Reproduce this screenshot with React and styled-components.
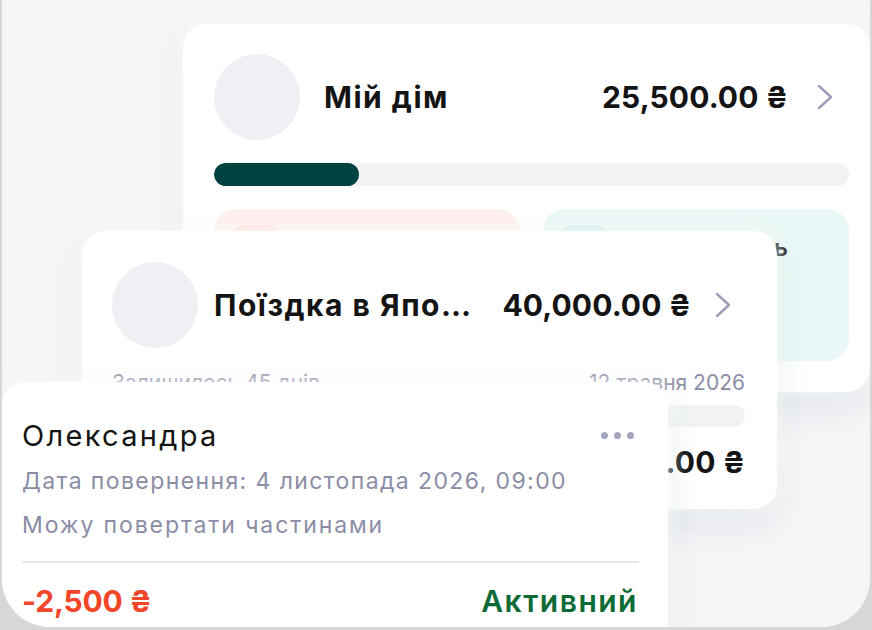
import React from "react";
import styled, { createGlobalStyle } from "styled-components";

const Global = createGlobalStyle`
  html, body { margin: 0; padding: 0; background: #d5d7d9; }
  body { font-family: Inter, "Noto Sans", sans-serif; -webkit-font-smoothing: antialiased; }
`;

const Stage = styled.div`
  width: 872px;
  height: 630px;
  background: #d5d7d9;
  padding-left: 2px;
  box-sizing: border-box;
  overflow: hidden;
`;

const Screen = styled.div`
  position: relative;
  width: 868px;
  height: 627px;
  background: #f6f5f8;
  border-radius: 0 0 48px 48px;
  overflow: hidden;
`;

const Card = styled.div`
  position: absolute;
  left: ${(p) => p.$left}px;
  top: ${(p) => p.$top}px;
  width: ${(p) => p.$width}px;
  box-sizing: border-box;
  padding: ${(p) => p.$pad};
  background: #ffffff;
  border-radius: 24px;
  box-shadow: 0 0 22px rgba(255, 255, 255, 0.9), 0 14px 34px rgba(40, 100, 100, 0.12);
`;

const HeaderRow = styled.div`
  display: flex;
  align-items: center;
`;

const Avatar = styled.div`
  flex: none;
  width: 86px;
  height: 86px;
  border-radius: 50%;
  background: #f0eff3;
  margin-right: ${(p) => p.$gap}px;
`;

const Title = styled.div`
  flex: 1;
  min-width: 0;
  font-size: 30px;
  font-weight: 700;
  color: #141414;
  letter-spacing: 1.5px;
  white-space: nowrap;
  overflow: hidden;
  text-overflow: ellipsis;
  max-width: ${(p) => (p.$max ? `${p.$max}px` : "none")};
`;

const Amount = styled.div`
  flex: none;
  margin-left: auto;
  font-size: 30px;
  font-weight: 700;
  color: #141414;
  letter-spacing: 0.1px;
  white-space: nowrap;
`;

const ChevronBox = styled.svg`
  flex: none;
  margin-left: ${(p) => p.$gap}px;
  margin-right: ${(p) => p.$end}px;
`;

const Chevron = ({ gap, end }) => (
  <ChevronBox $gap={gap} $end={end} width="16" height="26" viewBox="0 0 16 26">
    <polyline points="2,2 14,13 2,24" fill="none" stroke="#9c9eb9" strokeWidth="2.4" strokeLinecap="round" strokeLinejoin="round" />
  </ChevronBox>
);

const Track = styled.div`
  margin-top: ${(p) => p.$mt}px;
  height: ${(p) => p.$h}px;
  border-radius: 12px;
  background: #f1f4f3;
  overflow: hidden;
`;

const Fill = styled.div`
  height: 100%;
  border-radius: 12px;
  background: #004242;
`;

const Tiles = styled.div`
  margin-top: 23px;
  display: grid;
  grid-template-columns: 1fr 1fr;
  gap: 23px;
  height: 152px;
`;

const Tile = styled.div`
  border-radius: 22px;
  padding: 16px 17px;
  background: ${(p) => p.$bg};
  display: flex;
  align-items: flex-start;
  gap: 14px;
  overflow: hidden;
`;

const TilePill = styled.div`
  flex: none;
  width: 48px;
  height: 34px;
  border-radius: 14px;
  background: ${(p) => p.$bg};
`;

const TileLabel = styled.div`
  margin-top: 8px;
  font-size: 24px;
  font-weight: 600;
  color: #1a1a1a;
  letter-spacing: 1.8px;
  white-space: nowrap;
`;

const MetaRow = styled.div`
  margin-top: 22px;
  display: flex;
  justify-content: space-between;
  font-size: 21px;
  color: #8b8da6;
  letter-spacing: 0;
  line-height: 26px;
`;

const SumRow = styled.div`
  margin-top: 17px;
  display: flex;
  justify-content: flex-end;
  align-items: center;
`;

const NameRow = styled.div`
  display: flex;
  align-items: center;
  justify-content: space-between;
`;

const Name = styled.div`
  font-size: 29px;
  font-weight: 400;
  color: #141414;
  letter-spacing: 2.3px;
`;

const Dots = styled.div`
  display: flex;
  gap: 6px;
  margin-right: 5px;
`;

const Dot = styled.span`
  width: 7px;
  height: 7px;
  border-radius: 50%;
  background: #a4a6be;
`;

const Detail = styled.div`
  margin-top: ${(p) => p.$mt}px;
  font-size: 23px;
  color: #8b8da6;
  letter-spacing: ${(p) => p.$ls}px;
  line-height: 28px;
  white-space: nowrap;
`;

const Divider = styled.div`
  margin-top: 22px;
  height: 2px;
  background: #e8e8eb;
`;

const FootRow = styled.div`
  margin-top: 20px;
  display: flex;
  justify-content: space-between;
  align-items: center;
`;

const Debt = styled.div`
  font-size: 30px;
  font-weight: 700;
  color: #f2462a;
  letter-spacing: -0.2px;
`;

const Status = styled.div`
  font-size: 30px;
  font-weight: 600;
  color: #0b6a36;
  letter-spacing: 1.5px;
  margin-right: 1px;
`;

export default function App() {
  const homePct = 22.8;
  return (
    <>
      <Global />
      <Stage>
        <Screen>
          <Card $left={181} $top={24} $width={687} $pad="30px 21px 31px 31px">
            <HeaderRow>
              <Avatar $gap={24} />
              <Title>Мій дім</Title>
              <Amount>25,500.00 ₴</Amount>
              <Chevron gap={29} end={16} />
            </HeaderRow>
            <Track $mt={23} $h={23}>
              <Fill style={{ width: `${homePct}%` }} />
            </Track>
            <Tiles>
              <Tile $bg="#fff0ee">
                <TilePill $bg="#ffe2de" />
                <TileLabel>Витрачено</TileLabel>
              </Tile>
              <Tile $bg="#e9f8f6">
                <TilePill $bg="#d4efec" />
                <TileLabel>Залишилось</TileLabel>
              </Tile>
            </Tiles>
          </Card>

          <Card $left={80} $top={231} $width={695} $pad="31px 32px 29px 30px">
            <HeaderRow>
              <Avatar $gap={16} />
              <Title $max={264}>Поїздка в Японію</Title>
              <Amount>40,000.00 ₴</Amount>
              <Chevron gap={24} end={14} />
            </HeaderRow>
            <MetaRow>
              <span>Залишилось 45 днів</span>
              <span>12 травня 2026</span>
            </MetaRow>
            <Track $mt={9} $h={22}>
              <Fill style={{ width: "40%" }} />
            </Track>
            <SumRow>
              <Amount>16,000.00 ₴</Amount>
            </SumRow>
          </Card>

          <Card $left={0} $top={382} $width={666} $pad="36px 29px 60px 20px">
            <NameRow>
              <Name>Олександра</Name>
              <Dots>
                <Dot />
                <Dot />
                <Dot />
              </Dots>
            </NameRow>
            <Detail $mt={14} $ls={1.4}>Дата повернення: 4 листопада 2026, 09:00</Detail>
            <Detail $mt={16} $ls={1.9}>Можу повертати частинами</Detail>
            <Divider />
            <FootRow>
              <Debt>-2,500 ₴</Debt>
              <Status>Активний</Status>
            </FootRow>
          </Card>
        </Screen>
      </Stage>
    </>
  );
}
